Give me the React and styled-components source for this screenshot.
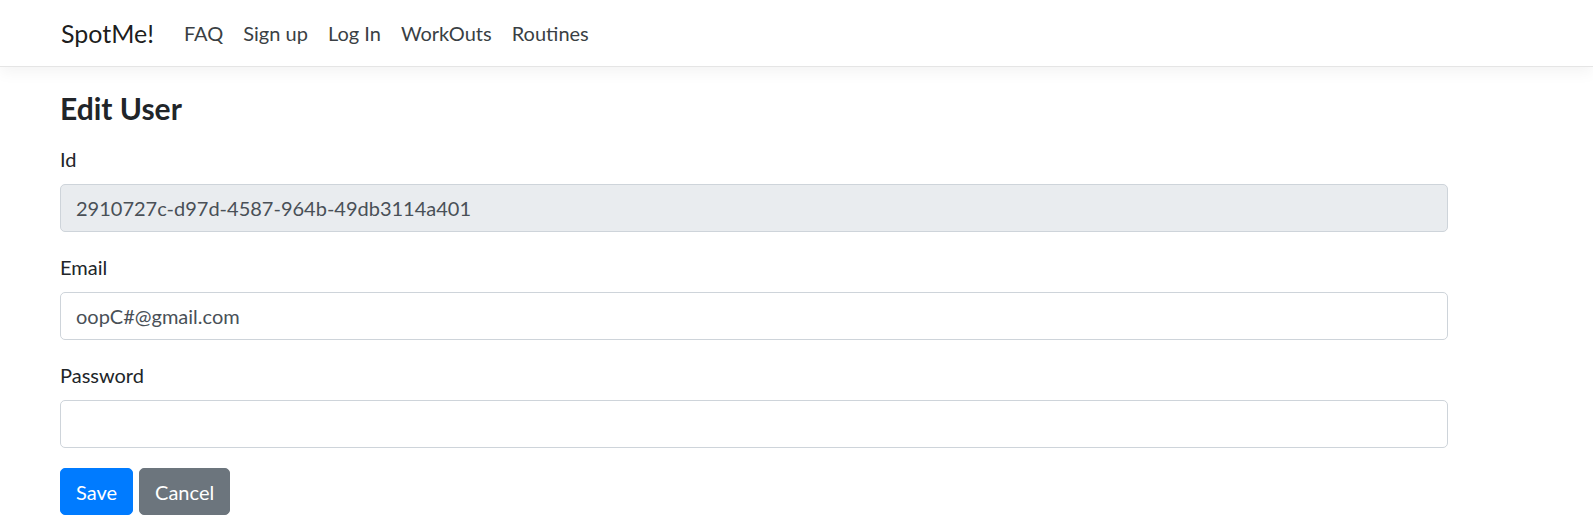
import React from 'react';
import styled, { createGlobalStyle } from 'styled-components';

const GlobalStyle = createGlobalStyle`
  body {
    margin: 0;
    background: #fff;
    font-family: Lato, "Noto Sans", sans-serif;
    color: #212529;
  }
`;

const Navbar = styled.nav`
  height: 66px;
  border-bottom: 1px solid #e5e5e5;
  box-shadow: 0 5px 15px rgba(0, 0, 0, 0.05);
  display: flex;
  align-items: center;
  padding-left: 61px;
`;

const Brand = styled.a`
  font-size: 25px;
  color: rgba(0, 0, 0, 0.9);
  margin-right: 20px;
  text-decoration: none;
`;

const NavLink = styled.a`
  font-size: 20px;
  color: #3a3f44;
  padding: 0 10px;
  text-decoration: none;
`;

const Main = styled.main`
  padding: 23px 0 0 60px;
  width: 1388px;
`;

const Title = styled.h4`
  font-size: 30px;
  font-weight: 700;
  line-height: 1.2;
  margin: 0 0 18px;
`;

const Group = styled.div`
  margin-bottom: 20px;
`;

const Label = styled.label`
  display: block;
  font-size: 20px;
  line-height: 30px;
  margin-bottom: 10px;
`;

const Input = styled.input`
  display: block;
  box-sizing: border-box;
  width: 100%;
  height: 48px;
  padding: 7px 15px;
  font-family: inherit;
  font-size: 20px;
  color: #495057;
  background: ${p => (p.disabled ? '#e9ecef' : '#fff')};
  border: 1px solid #ced4da;
  border-radius: 5px;
  outline: none;
`;

const Actions = styled.div`
  display: flex;
  gap: 6px;
`;

const Button = styled.button`
  height: 47px;
  padding: 0 15px;
  font-family: inherit;
  font-size: 20px;
  color: #fff;
  background: ${p => (p.$variant === 'secondary' ? '#6c757d' : '#007bff')};
  border: 1px solid ${p => (p.$variant === 'secondary' ? '#6c757d' : '#007bff')};
  border-radius: 5px;
  cursor: pointer;
`;

export default function App() {
  return (
    <>
      <GlobalStyle />
      <Navbar>
        <Brand href="#">SpotMe!</Brand>
        <NavLink href="#">FAQ</NavLink>
        <NavLink href="#">Sign up</NavLink>
        <NavLink href="#">Log In</NavLink>
        <NavLink href="#">WorkOuts</NavLink>
        <NavLink href="#">Routines</NavLink>
      </Navbar>
      <Main>
        <Title>Edit User</Title>
        <Group>
          <Label>Id</Label>
          <Input disabled defaultValue="2910727c-d97d-4587-964b-49db3114a401" />
        </Group>
        <Group>
          <Label>Email</Label>
          <Input defaultValue="oopC#@gmail.com" />
        </Group>
        <Group>
          <Label>Password</Label>
          <Input type="password" />
        </Group>
        <Actions>
          <Button>Save</Button>
          <Button $variant="secondary">Cancel</Button>
        </Actions>
      </Main>
    </>
  );
}
